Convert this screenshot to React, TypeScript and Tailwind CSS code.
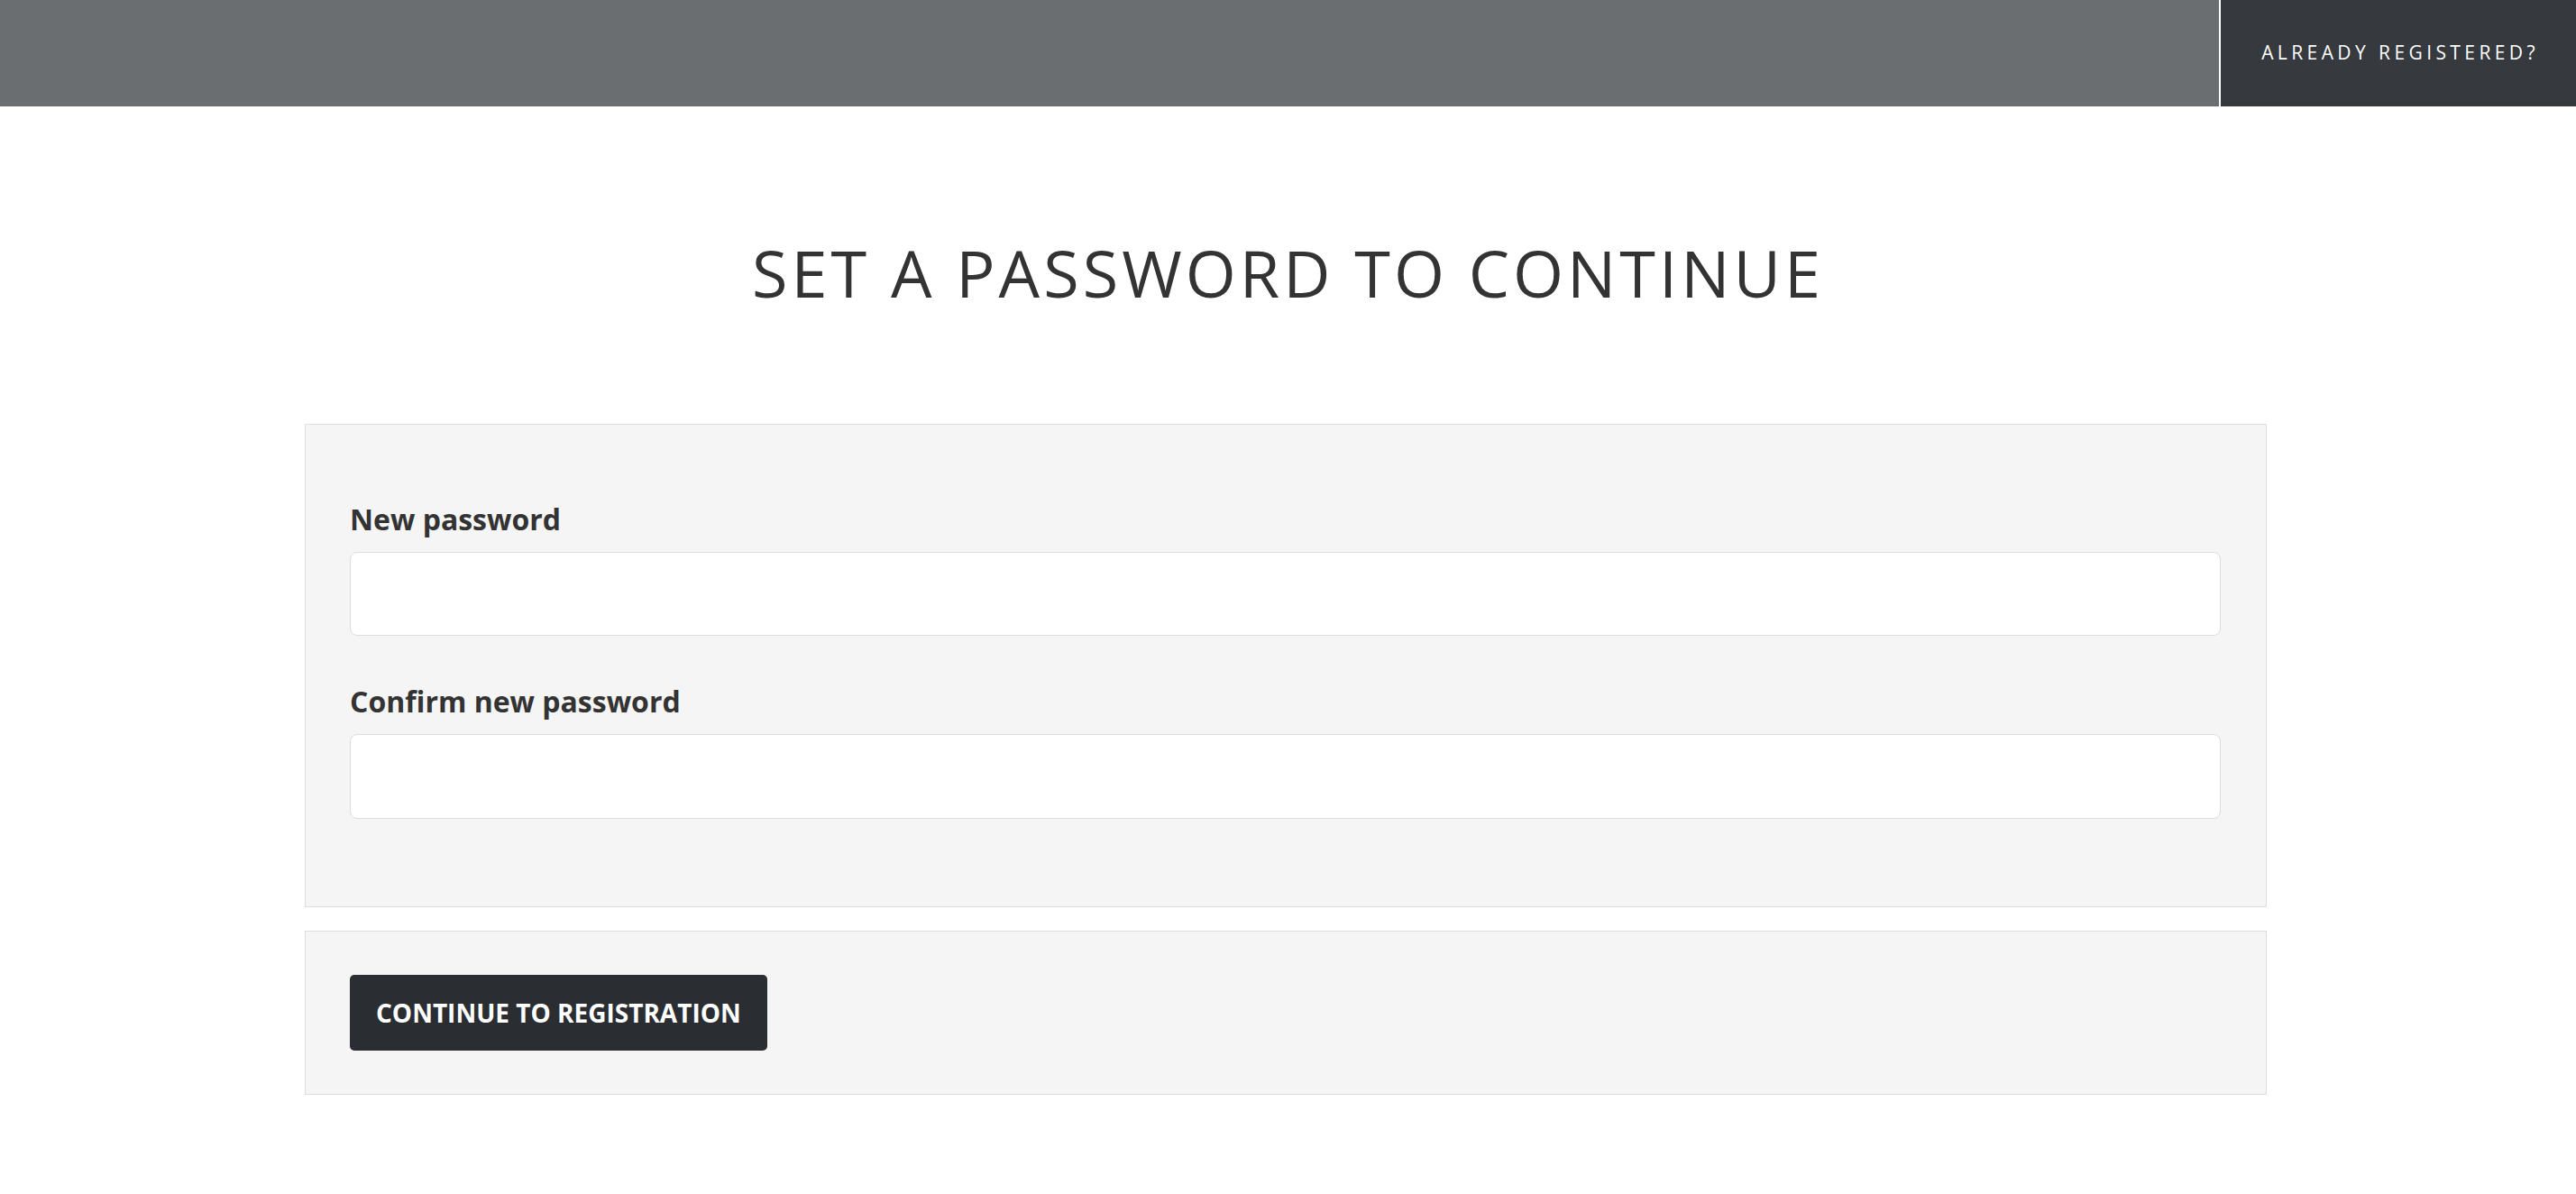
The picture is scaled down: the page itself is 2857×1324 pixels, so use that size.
export default function App() {
  return (
    <div className="min-h-screen bg-white font-['Open_Sans',sans-serif] text-[#333]">
      <header className="flex h-[118px] bg-[#6a6e71]">
        <div className="flex-1" />
        <a
          href="#"
          className="flex items-center border-l-2 border-white bg-[#36393d] pl-[45px] pr-[41px] text-[21px] uppercase tracking-[0.21em] text-white"
        >
          Already registered?
        </a>
      </header>

      <main>
        <h1 className="mt-[148px] text-center text-[72px] font-normal uppercase leading-none tracking-[0.056em] text-[#333]">
          Set a password to continue
        </h1>

        <div className="ml-[338px] mt-[132px] w-[2176px]">
          <form className="border border-[#ddd] bg-[#f5f5f5] pl-[49px] pr-[50px] pt-[81px] pb-[97px]">
            <div>
              <label className="block text-[32px] font-bold leading-[48px] text-[#333]">New password</label>
              <input
                type="password"
                className="mt-[12px] block h-[93px] w-full rounded-[8px] border border-[#ddd] bg-white px-4 text-[28px] outline-none"
              />
            </div>
            <div className="mt-[49px]">
              <label className="block text-[32px] font-bold leading-[48px] text-[#333]">Confirm new password</label>
              <input
                type="password"
                className="mt-[12px] block h-[94px] w-full rounded-[8px] border border-[#ddd] bg-white px-4 text-[28px] outline-none"
              />
            </div>
          </form>

          <div className="mt-[26px] border border-[#ddd] bg-[#f5f5f5] px-[49px] py-[48px]">
            <button
              type="button"
              className="flex h-[84px] items-center rounded-[5px] bg-[#2a2d31] px-[29px] text-[28px] font-bold uppercase text-white"
            >
              Continue to registration
            </button>
          </div>
        </div>
      </main>
    </div>
  );
}
